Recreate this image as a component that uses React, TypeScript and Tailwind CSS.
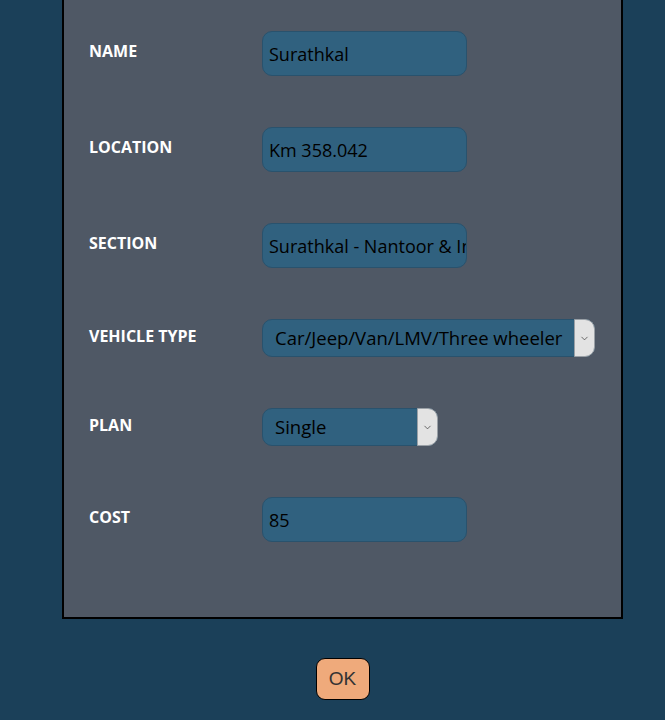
import { ChevronDown } from "lucide-react";

const font = { fontFamily: '"Trebuchet MS", "Open Sans", "DejaVu Sans", sans-serif' };

type Field =
  | { kind: "input"; label: string; value: string }
  | { kind: "select"; label: string; value: string; options: string[]; width: string };

const fields: Field[] = [
  { kind: "input", label: "NAME", value: "Surathkal" },
  { kind: "input", label: "LOCATION", value: "Km 358.042" },
  { kind: "input", label: "SECTION", value: "Surathkal - Nantoor & Interchange" },
  {
    kind: "select",
    label: "VEHICLE TYPE",
    value: "Car/Jeep/Van/LMV/Three wheeler",
    options: ["Car/Jeep/Van/LMV/Three wheeler", "LCV", "Bus/Truck"],
    width: "w-[333px]",
  },
  {
    kind: "select",
    label: "PLAN",
    value: "Single",
    options: ["Single", "Return", "Monthly"],
    width: "w-[176px]",
  },
  { kind: "input", label: "COST", value: "85" },
];

function TextField({ value }: { value: string }) {
  return (
    <input
      readOnly
      value={value}
      className="h-[45px] w-[205px] rounded-[10px] border border-[#29526d] bg-[#30617f] pl-[6px] text-[18px] text-black outline-none"
      style={font}
    />
  );
}

function SelectField({
  value,
  options,
  width,
}: {
  value: string;
  options: string[];
  width: string;
}) {
  return (
    <div className={"relative h-[38px] " + width}>
      <select
        defaultValue={value}
        className="h-full w-full appearance-none rounded-[10px] border border-[#29526d] bg-[#30617f] pl-[12px] text-[18.5px] text-black outline-none"
        style={font}
      >
        {options.map((o) => (
          <option key={o}>{o}</option>
        ))}
      </select>
      <span className="pointer-events-none absolute right-0 top-0 flex h-full w-[21px] items-center justify-center rounded-r-[10px] border border-[#9aa0a6] bg-[#e3e3e3]">
        <ChevronDown size={11} strokeWidth={1.5} className="text-[#333]" />
      </span>
    </div>
  );
}

export default function App() {
  return (
    <div className="min-h-[720px] w-full bg-[#1b4059]" style={font}>
      <div className="ml-[62px] w-[561px] border-x-2 border-b-2 border-black bg-[#4f5865] pb-[75px] pt-[31px]">
        <div className="flex flex-col gap-[51px]">
          {fields.map((f) => (
            <div key={f.label} className="flex items-center pl-[25px]">
              <span className="mb-[5px] w-[173px] text-[16px] font-bold text-white">
                {f.label}
              </span>
              {f.kind === "input" ? (
                <TextField value={f.value} />
              ) : (
                <SelectField value={f.value} options={f.options} width={f.width} />
              )}
            </div>
          ))}
        </div>
      </div>
      <div className="flex justify-center pl-[20px] pt-[39px]">
        <button
          type="button"
          className="h-[42px] w-[54px] rounded-[9px] border border-black bg-[#efaa7b] text-[19px] text-[#333]"
          style={{ fontFamily: '"Liberation Sans", Arial, sans-serif' }}
        >
          OK
        </button>
      </div>
    </div>
  );
}
